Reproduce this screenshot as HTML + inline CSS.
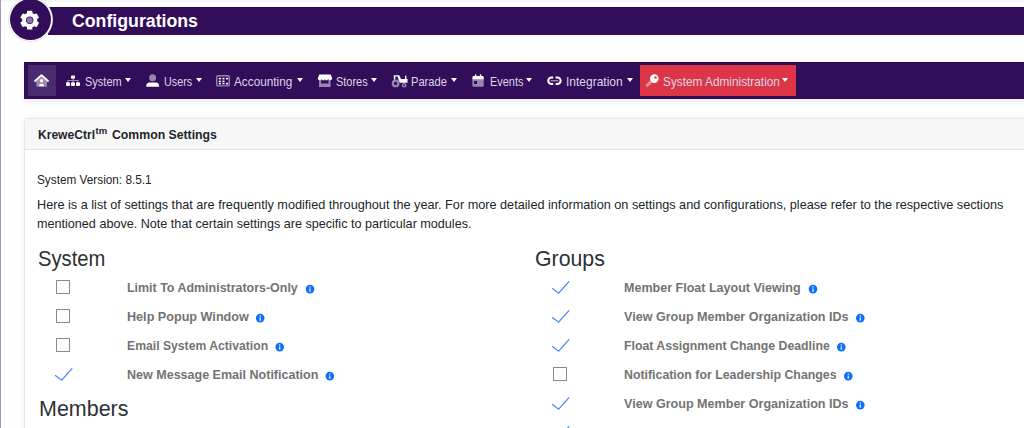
<!DOCTYPE html>
<html><head><meta charset="utf-8">
<style>
html,body{margin:0;padding:0;}
body{width:1024px;height:428px;overflow:hidden;position:relative;background:#fff;font-family:"Liberation Sans",sans-serif;}
.a{position:absolute;}
.t{position:absolute;white-space:nowrap;line-height:1;transform-origin:0 0;}
#topstrip{left:0;top:0;width:1024px;height:3px;background:linear-gradient(#f3f3f3,#fafafa 60%,#fff);}
#lborder{left:0;top:0;width:1px;height:428px;background:#a796bf;}
#hbar{left:48px;top:7px;width:980px;height:28px;background:#320e5a;border-top:1px solid #2a0550;box-sizing:border-box;}
#circle{left:9.5px;top:-1px;width:41px;height:41px;border-radius:50%;background:#320e5a;box-shadow:0 0 0 1px #fff,0 0 0 2px #e6e1ea;}
#nav{left:24px;top:62px;width:1010px;height:37px;background:#320e5a;border-top:1px solid #2a0550;box-sizing:border-box;box-shadow:0 3px 6px rgba(0,0,0,.08);}
#home{left:28px;top:65px;width:28px;height:31px;background:#4a2b70;}
#red{left:640px;top:65px;width:156px;height:31px;background:#dc3545;}
.caret{position:absolute;top:78.3px;width:0;height:0;border-left:3.7px solid transparent;border-right:3.7px solid transparent;border-top:4px solid #fff;}
#card{left:24px;top:118px;width:1010px;height:320px;border:1px solid #e6e6e6;border-radius:4px;box-sizing:border-box;background:#fff;box-shadow:0 0 7px rgba(0,0,0,.07);}
#cardh{left:25px;top:119px;width:1010px;height:31px;background:#f7f7f7;border-bottom:1px solid #e2e2e2;box-sizing:border-box;border-radius:3px 0 0 0;}
.cb{position:absolute;width:14px;height:14px;border:1.5px solid #8a8a8a;box-sizing:border-box;border-radius:0.6px;}
</style></head>
<body>
<div class="a" id="topstrip"></div>
<div class="a" id="lborder"></div>
<div class="a" id="hbar"></div>
<div class="a" id="circle"></div>
<span class="t" style="left:72px;top:12.20px;font-size:18px;font-weight:700;color:#fff;transform:scaleX(0.9840);">Configurations</span>
<div class="a" id="nav"></div>
<div class="a" id="home"></div>
<div class="a" id="red"></div>
<span class="t" style="left:84.7px;top:74.60px;font-size:13.5px;font-weight:400;color:#ddd5e7;transform:scaleX(0.8151);">System</span>
<div class="caret" style="left:125.3px"></div>
<span class="t" style="left:164.4px;top:74.60px;font-size:13.5px;font-weight:400;color:#ddd5e7;transform:scaleX(0.7971);">Users</span>
<div class="caret" style="left:196.0px"></div>
<span class="t" style="left:234.3px;top:74.60px;font-size:13.5px;font-weight:400;color:#ddd5e7;transform:scaleX(0.8727);">Accounting</span>
<div class="caret" style="left:297.0px"></div>
<span class="t" style="left:336.2px;top:74.60px;font-size:13.5px;font-weight:400;color:#ddd5e7;transform:scaleX(0.8097);">Stores</span>
<div class="caret" style="left:371.4px"></div>
<span class="t" style="left:411.0px;top:74.60px;font-size:13.5px;font-weight:400;color:#ddd5e7;transform:scaleX(0.8244);">Parade</span>
<div class="caret" style="left:450.6px"></div>
<span class="t" style="left:489.6px;top:74.60px;font-size:13.5px;font-weight:400;color:#ddd5e7;transform:scaleX(0.8091);">Events</span>
<div class="caret" style="left:526.2px"></div>
<span class="t" style="left:565.6px;top:74.60px;font-size:13.5px;font-weight:400;color:#ddd5e7;transform:scaleX(0.8886);">Integration</span>
<div class="caret" style="left:626.8px"></div>
<span class="t" style="left:662.7px;top:74.60px;font-size:13.5px;font-weight:400;color:#ddd5e7;transform:scaleX(0.8753);">System Administration</span>
<div class="caret" style="left:782.4px"></div>
<div class="a" id="card"></div>
<div class="a" id="cardh"></div>
<span class="t" style="left:38px;top:128.00px;font-size:13px;font-weight:700;color:#212529;transform:scaleX(0.9280);">KreweCtrl</span>
<span class="t" style="left:95.6px;top:125.50px;font-size:9.5px;font-weight:700;color:#212529;">tm</span>
<span class="t" style="left:111.6px;top:128.00px;font-size:13px;font-weight:700;color:#212529;transform:scaleX(0.9431);">Common Settings</span>
<span class="t" style="left:37.4px;top:173.00px;font-size:13px;font-weight:400;color:#212529;transform:scaleX(0.9063);">System Version: 8.5.1</span>
<span class="t" style="left:37.4px;top:198.10px;font-size:13px;font-weight:400;color:#212529;transform:scaleX(0.9754);">Here is a list of settings that are frequently modified throughout the year. For more detailed information on settings and configurations, please refer to the respective sections</span>
<span class="t" style="left:37.4px;top:216.50px;font-size:13px;font-weight:400;color:#212529;transform:scaleX(0.9698);">mentioned above. Note that certain settings are specific to particular modules.</span>
<span class="t" style="left:38px;top:247.66px;font-size:22.4px;font-weight:400;color:#2e3134;transform:scaleX(0.9024);">System</span>
<span class="t" style="left:535px;top:247.66px;font-size:22.4px;font-weight:400;color:#2e3134;transform:scaleX(0.9514);">Groups</span>
<span class="t" style="left:38.8px;top:397.90px;font-size:22.4px;font-weight:400;color:#2e3134;transform:scaleX(0.9586);">Members</span>
<div class="cb" style="left:56px;top:280px"></div>
<span class="t" style="left:127.2px;top:281.40px;font-size:13px;font-weight:700;color:#737373;transform:scaleX(0.9573);">Limit To Administrators-Only</span>
<div class="cb" style="left:56px;top:309px"></div>
<span class="t" style="left:127.2px;top:310.40px;font-size:13px;font-weight:700;color:#737373;transform:scaleX(0.9703);">Help Popup Window</span>
<div class="cb" style="left:56px;top:338px"></div>
<span class="t" style="left:127.2px;top:339.40px;font-size:13px;font-weight:700;color:#737373;transform:scaleX(0.9374);">Email System Activation</span>
<span class="t" style="left:127.2px;top:368.40px;font-size:13px;font-weight:700;color:#737373;transform:scaleX(0.9634);">New Message Email Notification</span>
<span class="t" style="left:624.3px;top:281.40px;font-size:13px;font-weight:700;color:#737373;transform:scaleX(0.9638);">Member Float Layout Viewing</span>
<span class="t" style="left:624.3px;top:310.40px;font-size:13px;font-weight:700;color:#737373;transform:scaleX(0.9666);">View Group Member Organization IDs</span>
<span class="t" style="left:624.3px;top:339.40px;font-size:13px;font-weight:700;color:#737373;transform:scaleX(0.9455);">Float Assignment Change Deadline</span>
<div class="cb" style="left:553px;top:367px"></div>
<span class="t" style="left:624.3px;top:368.40px;font-size:13px;font-weight:700;color:#737373;transform:scaleX(0.9494);">Notification for Leadership Changes</span>
<span class="t" style="left:624.3px;top:397.40px;font-size:13px;font-weight:700;color:#737373;transform:scaleX(0.9666);">View Group Member Organization IDs</span>
<svg class="a" style="left:0;top:0" width="1024" height="428">
<circle cx="310.0" cy="289.1" r="4.3" fill="#0d6efd"/>
<circle cx="310.00" cy="287.10" r="0.75" fill="#fff" fill-opacity="0.9"/>
<path d="M309.10,288.40 H310.60 V290.80 H311.00 V291.50 H309.00 V290.80 H309.40 V289.00 H309.10Z" fill="#fff" fill-opacity="0.9"/>
<circle cx="260.2" cy="318.1" r="4.3" fill="#0d6efd"/>
<circle cx="260.20" cy="316.10" r="0.75" fill="#fff" fill-opacity="0.9"/>
<path d="M259.30,317.40 H260.80 V319.80 H261.20 V320.50 H259.20 V319.80 H259.60 V318.00 H259.30Z" fill="#fff" fill-opacity="0.9"/>
<circle cx="279.7" cy="347.1" r="4.3" fill="#0d6efd"/>
<circle cx="279.70" cy="345.10" r="0.75" fill="#fff" fill-opacity="0.9"/>
<path d="M278.80,346.40 H280.30 V348.80 H280.70 V349.50 H278.70 V348.80 H279.10 V347.00 H278.80Z" fill="#fff" fill-opacity="0.9"/>
<polyline points="55.1,375.3 61.6,380.2 72.2,368.4" fill="none" stroke="#4d8bf5" stroke-width="1.35"/>
<circle cx="329.8" cy="376.1" r="4.3" fill="#0d6efd"/>
<circle cx="329.80" cy="374.10" r="0.75" fill="#fff" fill-opacity="0.9"/>
<path d="M328.90,375.40 H330.40 V377.80 H330.80 V378.50 H328.80 V377.80 H329.20 V376.00 H328.90Z" fill="#fff" fill-opacity="0.9"/>
<polyline points="552.1,288.3 558.6,293.2 569.2,281.4" fill="none" stroke="#4d8bf5" stroke-width="1.35"/>
<circle cx="813.0" cy="289.1" r="4.3" fill="#0d6efd"/>
<circle cx="813.00" cy="287.10" r="0.75" fill="#fff" fill-opacity="0.9"/>
<path d="M812.10,288.40 H813.60 V290.80 H814.00 V291.50 H812.00 V290.80 H812.40 V289.00 H812.10Z" fill="#fff" fill-opacity="0.9"/>
<polyline points="552.1,317.3 558.6,322.2 569.2,310.4" fill="none" stroke="#4d8bf5" stroke-width="1.35"/>
<circle cx="860.3" cy="318.1" r="4.3" fill="#0d6efd"/>
<circle cx="860.30" cy="316.10" r="0.75" fill="#fff" fill-opacity="0.9"/>
<path d="M859.40,317.40 H860.90 V319.80 H861.30 V320.50 H859.30 V319.80 H859.70 V318.00 H859.40Z" fill="#fff" fill-opacity="0.9"/>
<polyline points="552.1,346.3 558.6,351.2 569.2,339.4" fill="none" stroke="#4d8bf5" stroke-width="1.35"/>
<circle cx="841.3" cy="347.1" r="4.3" fill="#0d6efd"/>
<circle cx="841.30" cy="345.10" r="0.75" fill="#fff" fill-opacity="0.9"/>
<path d="M840.40,346.40 H841.90 V348.80 H842.30 V349.50 H840.30 V348.80 H840.70 V347.00 H840.40Z" fill="#fff" fill-opacity="0.9"/>
<circle cx="848.3" cy="376.1" r="4.3" fill="#0d6efd"/>
<circle cx="848.30" cy="374.10" r="0.75" fill="#fff" fill-opacity="0.9"/>
<path d="M847.40,375.40 H848.90 V377.80 H849.30 V378.50 H847.30 V377.80 H847.70 V376.00 H847.40Z" fill="#fff" fill-opacity="0.9"/>
<polyline points="552.1,404.3 558.6,409.2 569.2,397.4" fill="none" stroke="#4d8bf5" stroke-width="1.35"/>
<circle cx="860.3" cy="405.1" r="4.3" fill="#0d6efd"/>
<circle cx="860.30" cy="403.10" r="0.75" fill="#fff" fill-opacity="0.9"/>
<path d="M859.40,404.40 H860.90 V406.80 H861.30 V407.50 H859.30 V406.80 H859.70 V405.00 H859.40Z" fill="#fff" fill-opacity="0.9"/>
<polyline points="552.1,433.3 558.6,438.2 569.2,426.4" fill="none" stroke="#4d8bf5" stroke-width="1.35"/>

<path d="M26.25,14.22 L27.57,13.64 L27.68,11.43 L31.72,11.43 L31.83,13.64 L33.15,14.22 L34.32,15.07 L36.28,14.06 L38.31,17.57 L36.45,18.77 L36.60,20.20 L36.45,21.63 L38.31,22.83 L36.28,26.34 L34.32,25.33 L33.15,26.18 L31.83,26.76 L31.72,28.97 L27.68,28.97 L27.57,26.76 L26.25,26.18 L25.08,25.33 L23.12,26.34 L21.09,22.83 L22.95,21.63 L22.80,20.20 L22.95,18.77 L21.09,17.57 L23.12,14.06 L25.08,15.07Z" fill="#fff" stroke="#fff" stroke-width="1.3" stroke-linejoin="round"/>
<circle cx="29.7" cy="20.2" r="3.7" fill="#320e5a"/>
<circle cx="29.7" cy="20.2" r="3.0" fill="#8a78ad"/>
<path d="M36.3,86 V80.6 L41.5,76 L46.9,80.6 V86 Q46.9,86.8 46.1,86.8 H37.1 Q36.3,86.8 36.3,86Z" fill="#9a88b4"/>
<polyline points="35,81 41.5,75.2 48,81" fill="none" stroke="#fff" stroke-width="1.8" stroke-linecap="round" stroke-linejoin="round"/>
<circle cx="41.5" cy="80.8" r="1.7" fill="#fff"/>
<path d="M39,86.2 Q39,83.8 41.5,83.8 Q44,83.8 44,86.2Z" fill="#fff"/>
<path d="M73,78.7 V80.5 M68,82.3 V80.5 H78 V82.3 M73,80.5 V82.3" fill="none" stroke="#9787b0" stroke-width="1.2"/>
<rect x="71" y="75.4" width="4" height="3.4" rx="1" fill="#fff"/>
<rect x="66" y="82.3" width="4" height="3.7" rx="1" fill="#fff"/>
<rect x="71" y="82.3" width="4" height="3.7" rx="1" fill="#fff"/>
<rect x="76" y="82.3" width="4" height="3.7" rx="1" fill="#fff"/>
<circle cx="152.6" cy="77.8" r="3.5" fill="#9787b0"/>
<path d="M146.3,86.8 L146.3,85.6 Q146.6,82.4 149.6,82.4 L155.8,82.4 Q158.8,82.4 159.1,85.6 L159.1,86.8Z" fill="#fff"/>
<rect x="216.7" y="75.7" width="12.6" height="10.2" rx="1.5" fill="none" stroke="#9787b0" stroke-width="1.4"/>
<g fill="#fff">
<rect x="218.8" y="77.8" width="2.1" height="1.6"/><rect x="222.4" y="77.8" width="2.1" height="1.6"/><rect x="226" y="77.8" width="2.1" height="1.6"/>
<rect x="218.8" y="80.6" width="2.1" height="1.6"/><rect x="222.4" y="80.6" width="2.1" height="1.6"/>
<rect x="218.8" y="82.8" width="2.1" height="1.6"/><rect x="222.4" y="82.8" width="2.1" height="1.6"/><rect x="226" y="82.8" width="2.1" height="1.6"/>
</g>
<path d="M319,80 H330.5 V87 H319Z M321,80.2 V83.6 H328.5 V80.2Z" fill="#9787b0" fill-rule="evenodd"/>
<path d="M319.3,74.4 H330.7 L332.2,78.2 Q332.2,80.2 330.2,80.2 Q328.7,80.2 328.2,79.2 Q327.5,80.2 326.2,80.2 Q325.2,80.2 325,79.2 Q324.5,80.2 323.2,80.2 Q322,80.2 321.6,79.2 Q321,80.2 319.6,80.2 Q317.8,80.2 317.8,78.2Z" fill="#fff"/>
<circle cx="395.6" cy="83.4" r="3.9" fill="#9787b0"/>
<circle cx="404.2" cy="85.2" r="2.3" fill="#9787b0"/>
<circle cx="395.6" cy="83.4" r="1.6" fill="#320e5a"/>
<circle cx="404.2" cy="85.2" r="0.9" fill="#320e5a"/>
<path d="M393.8,79.5 V75.2 H399.2 L401,79 H405 V75.8 H406.4 V79 H407.5 V82.7 H400.3 L399.5,82 L398.5,79.5 L397.5,76.6 H395.3 V79.5Z" fill="#fff"/>
<rect x="472.4" y="78.6" width="11.3" height="8.2" rx="1" fill="#9787b0"/>
<path d="M472.4,79.2 V77.4 Q472.4,76 473.8,76 H482.3 Q483.7,76 483.7,77.4 V79.2Z" fill="#fff"/>
<rect x="474.9" y="74.2" width="1.4" height="2.4" rx="0.6" fill="#fff"/>
<rect x="479.9" y="74.2" width="1.4" height="2.4" rx="0.6" fill="#fff"/>
<rect x="474" y="81" width="3" height="3" fill="#320e5a"/>
<path d="M553.2,77.5 H551.5 A3.25,3.25 0 0 0 551.5,84 H553.2 M555.6,77.5 H557.4 A3.25,3.25 0 0 1 557.4,84 H555.6" fill="none" stroke="#fff" stroke-width="2"/>
<line x1="551.3" y1="80.8" x2="557.7" y2="80.8" stroke="#9787b0" stroke-width="1.6" stroke-linecap="round"/>
<line x1="647.2" y1="85.3" x2="651.5" y2="81.2" stroke="#eb8a94" stroke-width="3" stroke-linecap="round"/>
<circle cx="654.3" cy="78.6" r="4.3" fill="#fff"/>
<circle cx="655.5" cy="77.5" r="1.2" fill="#dc3545"/>

</svg>
</body></html>
